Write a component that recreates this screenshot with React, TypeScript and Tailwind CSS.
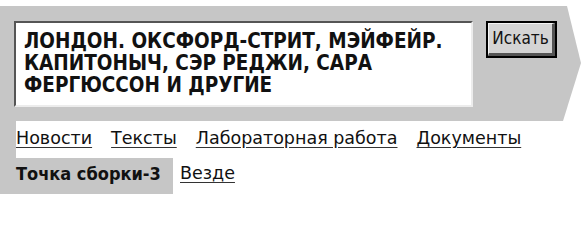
import React from "react";

export default function App() {
  return (
    <div className="w-[581px] h-[234px] bg-white pt-[6px] font-['DejaVu_Sans_Condensed','DejaVu_Sans',sans-serif] text-[#111]">
      <div className="h-[115px] bg-[#c6c6c6] [clip-path:polygon(0_0,567px_0,581px_57px,563px_115px,0_115px)] flex items-start pl-[14px] pt-[15px]">
        <div className="w-[459px] h-[86px] bg-white border-2 border-t-[#555] border-l-[#555] border-r-[#ececec] border-b-[#ececec] pl-[8px] pt-[7px] font-bold text-[20.5px] leading-[22px]">
          ЛОНДОН. ОКСФОРД-СТРИТ, МЭЙФЕЙР. КАПИТОНЫЧ, СЭР РЕДЖИ, САРА ФЕРГЮССОН И ДРУГИЕ
        </div>
        <div className="ml-[13px] w-[71px] h-[37px] border-2 border-black bg-[#d4d4d4] flex">
          <div className="flex-1 border-t border-l border-[#f4f4f4] border-r-[3px] border-b-[3px] border-r-[#555] border-b-[#555] flex items-center justify-center text-[17px] text-[#111]">
            Искать
          </div>
        </div>
      </div>
      <div className="flex h-[37px]">
        <div className="w-[16px] bg-[#c6c6c6]" />
        <div className="flex items-center pb-[3px] gap-[19px] text-[17.5px] text-[#111] font-['DejaVu_Sans',sans-serif]">
          <a className="underline underline-offset-[3px] decoration-[#333]">Новости</a>
          <a className="underline underline-offset-[3px] decoration-[#333]">Тексты</a>
          <a className="underline underline-offset-[3px] decoration-[#333]">Лабораторная работа</a>
          <a className="underline underline-offset-[3px] decoration-[#333]">Документы</a>
        </div>
      </div>
      <div className="flex h-[36px] items-stretch">
        <div className="w-[173px] bg-[#c6c6c6] pl-[16px] pb-[5px] flex items-center font-bold text-[18px]">
          Точка сборки-3
        </div>
        <div className="flex items-center pl-[7px] pb-[5px] text-[17.5px] font-['DejaVu_Sans',sans-serif]">
          <a className="underline underline-offset-[3px] decoration-[#333]">Везде</a>
        </div>
      </div>
    </div>
  );
}
